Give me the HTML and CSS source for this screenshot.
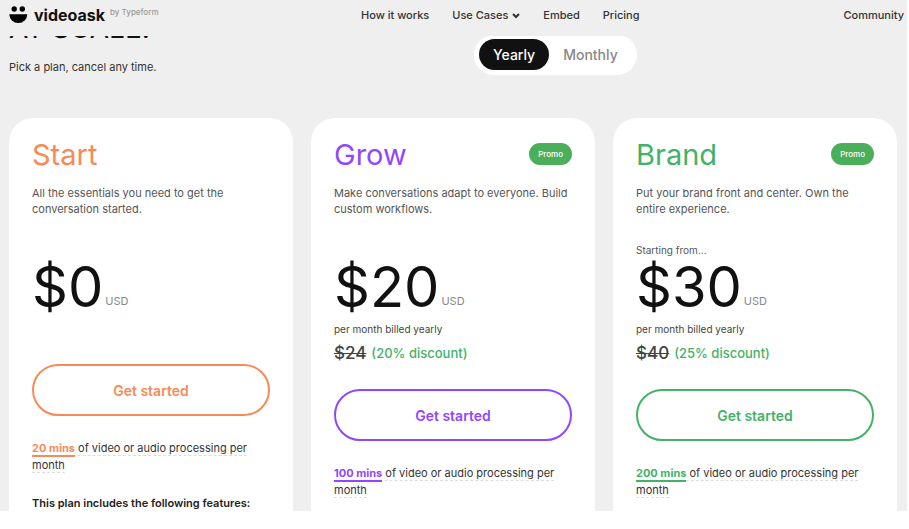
FILE: index.html
```
<!DOCTYPE html>
<html lang="en">
<head>
    <meta charset="UTF-8">
    <meta name="viewport" content="width=device-width, initial-scale=1.0">
    <title>VideoAsk Pricing</title>
    <link rel="stylesheet" href="styles.css">
</head>
<body>
    <div class="page">
        <header class="header">
            <a class="logo" href="#">
                <svg width="19" height="18" viewBox="0 0 19 18" aria-hidden="true">
                    <circle cx="5.2" cy="3" r="2.7"/>
                    <circle cx="13.3" cy="3" r="2.7"/>
                    <path d="M.3 8.3h18a9 8.6 0 0 1-18 0z"/>
                </svg>
                <span class="logo-name">videoask</span>
                <span class="logo-by">by Typeform</span>
            </a>
            <nav class="nav">
                <a href="#">How it works</a>
                <a href="#">Use Cases
                    <svg width="8" height="6" viewBox="0 0 8 6" aria-hidden="true"><path d="M1 1l3 3 3-3"/></svg>
                </a>
                <a href="#">Embed</a>
                <a href="#">Pricing</a>
            </nav>
            <a class="community" href="#">Community</a>
        </header>

        <main>
            <section class="hero">
                <div>
                    <h1>AT SCALE.</h1>
                    <p>Pick a plan, cancel any time.</p>
                </div>
                <div class="toggle">
                    <button class="active" type="button">Yearly</button>
                    <button type="button">Monthly</button>
                </div>
            </section>

            <section class="plans">
                <article class="plan start">
                    <div class="plan-top">
                        <h2>Start</h2>
                    </div>
                    <p class="description">All the essentials you need to get the conversation started.</p>
                    <p class="from"></p>
                    <p class="price">$0<span>USD</span></p>
                    <p class="billing"></p>
                    <button class="cta" type="button">Get started</button>
                    <p class="minutes"><a href="#"><strong>20 mins</strong> of video or audio processing per month</a></p>
                    <h3>This plan includes the following features:</h3>
                </article>

                <article class="plan grow">
                    <div class="plan-top">
                        <h2>Grow</h2>
                        <span class="promo">Promo</span>
                    </div>
                    <p class="description">Make conversations adapt to everyone. Build custom workflows.</p>
                    <p class="from"></p>
                    <p class="price">$20<span>USD</span></p>
                    <p class="billing">per month billed yearly</p>
                    <p class="discount"><s>$24</s> (20% discount)</p>
                    <button class="cta" type="button">Get started</button>
                    <p class="minutes"><a href="#"><strong>100 mins</strong> of video or audio processing per month</a></p>
                </article>

                <article class="plan brand">
                    <div class="plan-top">
                        <h2>Brand</h2>
                        <span class="promo">Promo</span>
                    </div>
                    <p class="description">Put your brand front and center. Own the entire experience.</p>
                    <p class="from">Starting from...</p>
                    <p class="price">$30<span>USD</span></p>
                    <p class="billing">per month billed yearly</p>
                    <p class="discount"><s>$40</s> (25% discount)</p>
                    <button class="cta" type="button">Get started</button>
                    <p class="minutes"><a href="#"><strong>200 mins</strong> of video or audio processing per month</a></p>
                </article>
            </section>
        </main>
    </div>
</body>
</html>
```
FILE: styles.css
```
* {
    box-sizing: border-box;
}

body {
    margin: 0;
    background-color: #fff;
    color: #333;
    font-family: Inter, "Liberation Sans", sans-serif;
    font-size: 11px;
    overflow: hidden;
}

h1, h2, h3, p {
    margin: 0;
}

a {
    color: inherit;
    text-decoration: none;
}

button {
    font-family: inherit;
    cursor: pointer;
}

.page {
    height: calc(100vh - 18px);
    margin-right: 2px;
    background-color: #efefef;
    overflow: hidden;
}

/* header */
.header {
    position: relative;
    z-index: 1;
    display: grid;
    grid-template-columns: 352px 1fr auto;
    align-items: center;
    height: 36px;
    padding: 0 3px 6px 9px;
    background-color: #efefef;
    font-weight: 500;
}

.logo {
    display: flex;
    align-items: center;
    color: #111;
}

.logo-name {
    margin-left: 6px;
    font-size: 16px;
    font-weight: 700;
}

.logo-by {
    align-self: flex-start;
    margin-left: 5px;
    color: #999;
    font-size: 8px;
    line-height: 14px;
}

.nav {
    display: flex;
    gap: 23px;
}

.nav svg {
    margin-left: 1px;
    fill: none;
    stroke: #333;
    stroke-width: 2;
}

/* hero */
.hero {
    display: grid;
    grid-template-columns: 465px 1fr;
    align-items: start;
    height: 82px;
    padding-left: 9px;
}

.hero h1 {
    margin-top: -26px;
    color: #111;
    font-size: 28px;
    font-weight: 400;
    line-height: 36px;
}

.hero p {
    margin-top: 13px;
    line-height: 16px;
}

.toggle {
    display: flex;
    justify-self: start;
    margin-top: -1px;
    padding: 4px 5px 5px;
    border-radius: 20px;
    background-color: #fff;
}

.toggle button {
    height: 31px;
    padding: 0 14px;
    border: none;
    border-radius: 16px;
    background: none;
    color: #888;
    font-size: 14px;
    font-weight: 500;
}

.toggle .active {
    background-color: #111;
    color: #fff;
}

/* plans */
.plans {
    display: grid;
    grid-template-columns: repeat(3, 1fr);
    gap: 18px;
    padding: 0 10px 0 9px;
}

.plan {
    min-height: 420px;
    padding: 18px 23px;
    border-radius: 24px;
    background-color: #fff;
}

.start {
    --accent: #f68b58;
}

.grow {
    --accent: #9147ff;
}

.brand {
    --accent: #43b268;
}

.plan-top {
    display: flex;
    align-items: center;
    justify-content: space-between;
    height: 36px;
}

.plan h2 {
    color: var(--accent);
    font-size: 29px;
    font-weight: 400;
}

.promo {
    padding: 0 9px;
    border-radius: 11px;
    background-color: #4bae5b;
    color: #fff;
    font-size: 8px;
    font-weight: 500;
    line-height: 22px;
}

.description {
    margin-top: 13px;
    color: #555;
    line-height: 16px;
}

.from {
    height: 14px;
    margin-top: 26px;
    color: #555;
    font-size: 10px;
    line-height: 14px;
}

.price {
    margin-bottom: 6px;
    color: #111;
    font-size: 56px;
    line-height: 60px;
}

.price span {
    margin-left: 2px;
    color: #888;
    font-size: 11px;
    line-height: 11px;
    vertical-align: 2px;
}

.billing {
    height: 12px;
    color: #444;
    font-size: 10px;
    line-height: 12px;
}

.discount {
    display: flex;
    align-items: center;
    gap: 5px;
    margin-top: 9px;
    color: #43b268;
    font-size: 13px;
    font-weight: 500;
    line-height: 18px;
}

.discount s {
    color: #444;
    font-size: 17px;
}

.cta {
    display: block;
    width: 100%;
    height: 52px;
    margin-top: 29px;
    border: 2px solid var(--accent);
    border-radius: 26px;
    background-color: #fff;
    color: var(--accent);
    font-size: 14px;
    font-weight: 600;
}

.discount + .cta {
    margin-top: 27px;
}

.minutes {
    margin-top: 24px;
    line-height: 17px;
}

.minutes a {
    border-bottom: 1px dashed #ddd;
}

.minutes strong {
    border-bottom: 2px solid var(--accent);
    color: var(--accent);
    font-weight: 700;
}

.plan h3 {
    margin-top: 21px;
    color: #222;
    font-size: 11px;
    font-weight: 600;
    line-height: 17px;
}
```
